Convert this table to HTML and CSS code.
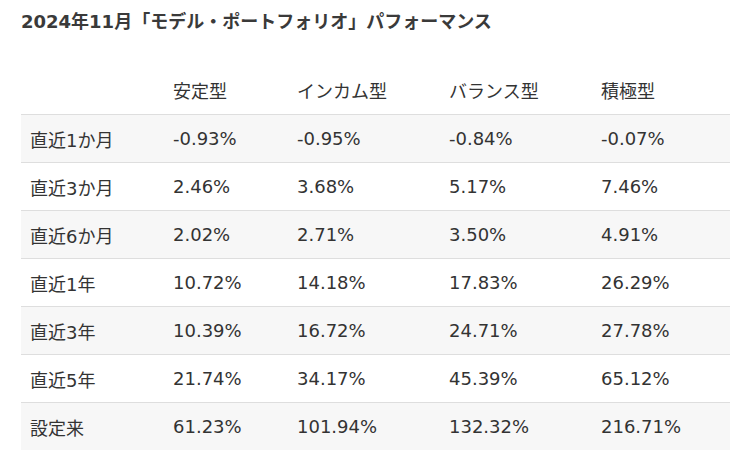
FILE: index.html
```html
<!DOCTYPE html>
<html lang="ja">
<head>
<meta charset="utf-8">
<link rel="stylesheet" href="styles.css">
</head>
<body>
<div class="page">
  <h2 class="title">2024年11月「モデル・ポートフォリオ」パフォーマンス</h2>
  <table class="perf">
    <colgroup>
      <col class="c0"><col class="c1"><col class="c2"><col class="c3"><col class="c4">
    </colgroup>
    <thead>
      <tr><th></th><th>安定型</th><th>インカム型</th><th>バランス型</th><th>積極型</th></tr>
    </thead>
    <tbody>
      <tr><td>直近1か月</td><td>-0.93%</td><td>-0.95%</td><td>-0.84%</td><td>-0.07%</td></tr>
      <tr><td>直近3か月</td><td>2.46%</td><td>3.68%</td><td>5.17%</td><td>7.46%</td></tr>
      <tr><td>直近6か月</td><td>2.02%</td><td>2.71%</td><td>3.50%</td><td>4.91%</td></tr>
      <tr><td>直近1年</td><td>10.72%</td><td>14.18%</td><td>17.83%</td><td>26.29%</td></tr>
      <tr><td>直近3年</td><td>10.39%</td><td>16.72%</td><td>24.71%</td><td>27.78%</td></tr>
      <tr><td>直近5年</td><td>21.74%</td><td>34.17%</td><td>45.39%</td><td>65.12%</td></tr>
      <tr><td>設定来</td><td>61.23%</td><td>101.94%</td><td>132.32%</td><td>216.71%</td></tr>
    </tbody>
  </table>
</div>
</body>
</html>
```
FILE: styles.css
```css
html, body {
  margin: 0;
  padding: 0;
  background: #fff;
}
body {
  font-family: "DejaVu Sans", "Noto Sans CJK JP", sans-serif;
  color: #333;
}
.page {
  padding: 8px 21px 0 21px;
}
.title {
  margin: 0;
  font-size: 18px;
  line-height: 27px;
  font-weight: bold;
  color: #3a3a3a;
}
.perf {
  margin-top: 31px;
  width: 709px;
  border-collapse: collapse;
  table-layout: fixed;
  font-size: 18px;
}
.c0 { width: 143px; }
.c1 { width: 124px; }
.c2 { width: 152px; }
.c3 { width: 152px; }
.c4 { width: 138px; }
.perf th, .perf td {
  height: 47px;
  padding: 0 0 0 9px;
  text-align: left;
  font-weight: normal;
  vertical-align: middle;
  white-space: nowrap;
}
.perf thead th {
  height: 48px;
  padding-top: 0;
}
.perf tbody tr {
  border-top: 1px solid #dedede;
}
.perf tbody tr:nth-child(odd) {
  background: #f7f7f7;
}
```
